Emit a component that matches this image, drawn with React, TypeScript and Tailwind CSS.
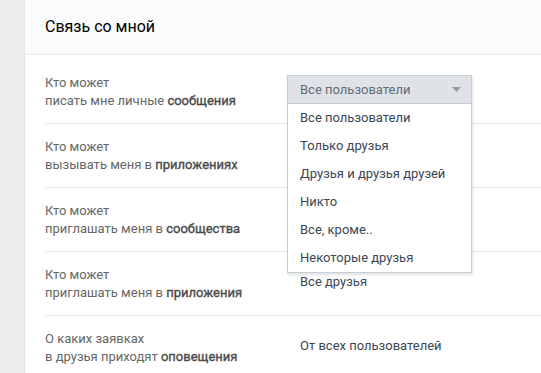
import React from "react";

const rows = [
  { a: "Кто может", b: "писать мне личные ", bold: "сообщения", value: "" },
  { a: "Кто может", b: "вызывать меня в ", bold: "приложениях", value: "" },
  { a: "Кто может", b: "приглашать меня в ", bold: "сообщества", value: "" },
  { a: "Кто может", b: "приглашать меня в ", bold: "приложения", value: "Все друзья" },
  { a: "О каких заявках", b: "в друзья приходят ", bold: "оповещения", value: "От всех пользователей" },
];

const options = [
  "Все пользователи",
  "Только друзья",
  "Друзья и друзья друзей",
  "Никто",
  "Все, кроме..",
  "Некоторые друзья",
];

function Dropdown() {
  return (
    <div className="absolute left-[242px] top-[15px] w-[185px] border border-[#c5ced8] bg-white shadow-[1px_2px_3px_rgba(0,0,0,0.12)] z-10">
      <div className="h-[28px] bg-[#dfe3e8] border-b border-[#c5ced8] flex items-center justify-between pl-[12px] pr-[10px] text-[#5f6b78]">
        <span>Все пользователи</span>
        <svg width="9" height="5" viewBox="0 0 9 5">
          <path d="M0 0 L9 0 L4.5 5 Z" fill="#8f9aa6" />
        </svg>
      </div>
      {options.map((o) => (
        <div key={o} className="h-[28px] flex items-center pl-[12px] text-[#3b4654]">
          {o}
        </div>
      ))}
    </div>
  );
}

export default function App() {
  return (
    <div
      className="w-[541px] h-[373px] overflow-hidden flex bg-white text-[13px] leading-[18px]"
      style={{ fontFamily: "Roboto, 'Noto Sans', sans-serif" }}
    >
      <div className="w-[25px] shrink-0 bg-[#edeef0] border-r border-[#e3e4e8]" />
      <div className="flex-1">
        <div className="h-[55px] bg-[#fafbfc] border-b border-[#e7e8ec] flex items-center pl-[20px] text-[16px] text-black">
          Связь со мной
        </div>
        <div className="pt-[5px] pl-[20px]">
          {rows.map((r, i) => (
            <div
              key={i}
              className="relative flex items-center h-[64px] border-b border-[#e7e8ec]"
            >
              <div className="w-[255px] shrink-0 text-[#656565]">
                <div>{r.a}</div>
                <div>
                  {r.b}
                  <span className="text-[#4a4a4a] [-webkit-text-stroke:0.35px_#4a4a4a]">
                    {r.bold}
                  </span>
                </div>
              </div>
              <div className="text-[#3b4654] mb-[4px]">{r.value}</div>
              {i === 0 && <Dropdown />}
            </div>
          ))}
        </div>
      </div>
    </div>
  );
}
